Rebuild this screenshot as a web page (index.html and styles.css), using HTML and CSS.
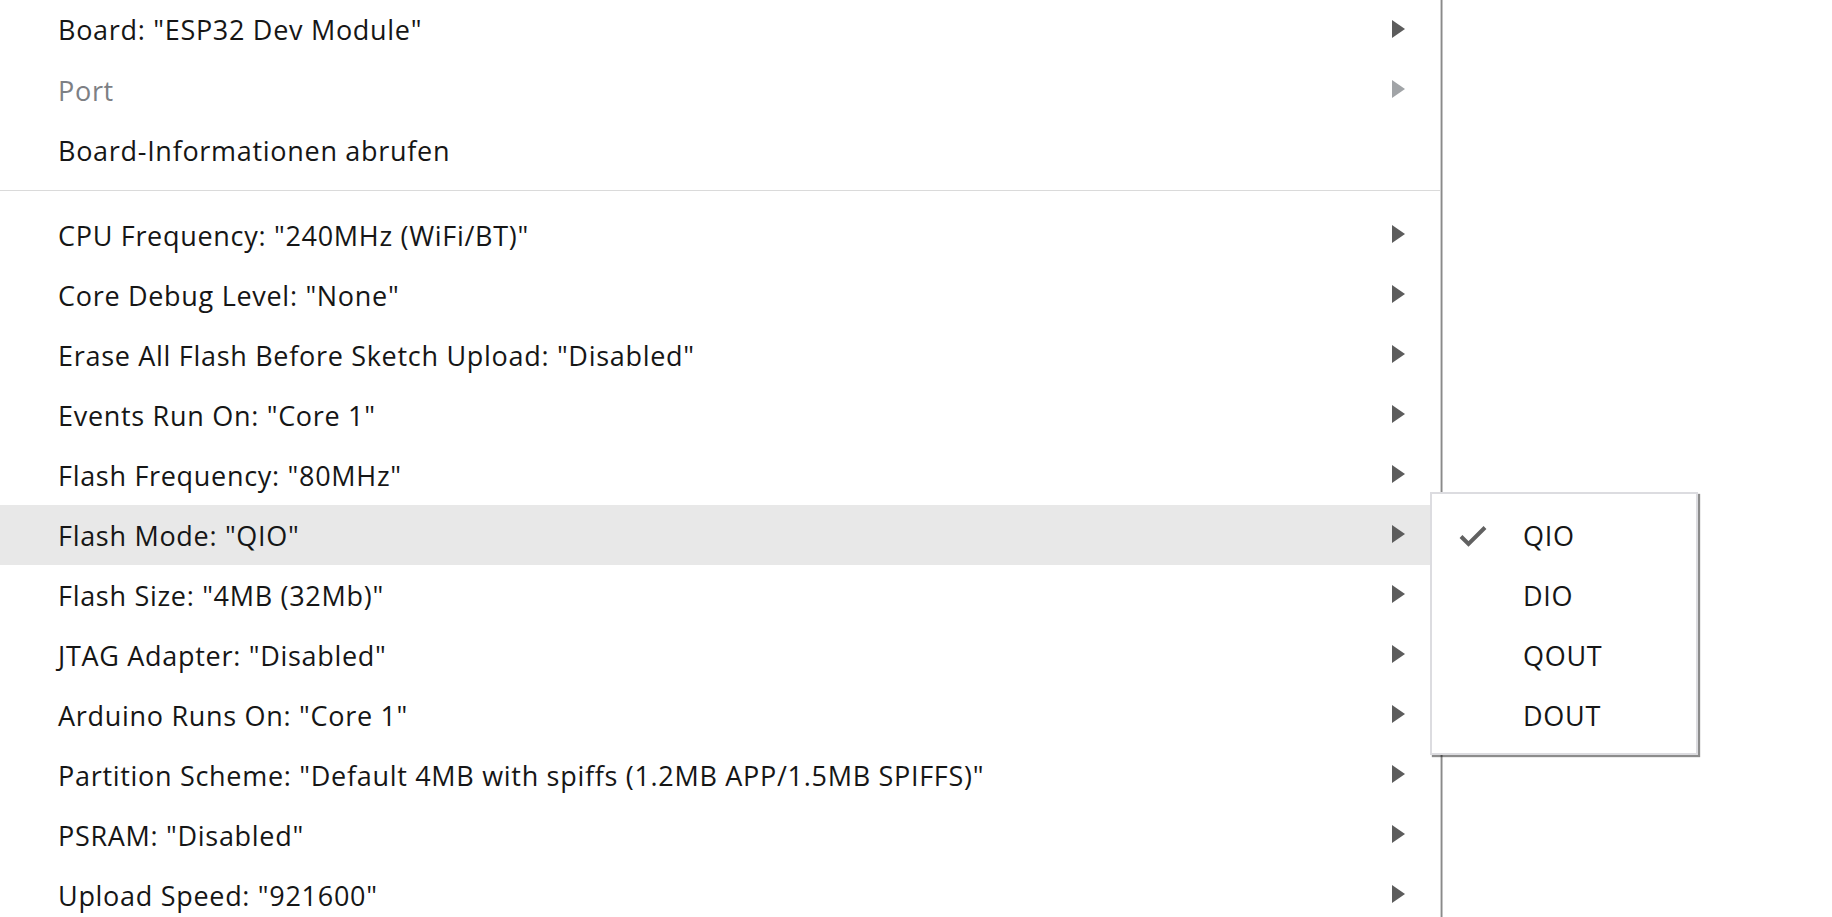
FILE: index.html
```html
<!DOCTYPE html>
<html lang="de">
<head>
<meta charset="utf-8">
<title>Werkzeuge</title>
<link rel="stylesheet" href="styles.css">
</head>
<body>
<div class="screen">
  <div class="menu">
    <div class="item"><span class="label">Board: "ESP32 Dev Module"</span><span class="arrow"></span></div>
    <div class="item disabled"><span class="label">Port</span><span class="arrow"></span></div>
    <div class="item"><span class="label">Board-Informationen abrufen</span></div>
    <div class="separator"></div>
    <div class="item"><span class="label">CPU Frequency: "240MHz (WiFi/BT)"</span><span class="arrow"></span></div>
    <div class="item"><span class="label">Core Debug Level: "None"</span><span class="arrow"></span></div>
    <div class="item"><span class="label">Erase All Flash Before Sketch Upload: "Disabled"</span><span class="arrow"></span></div>
    <div class="item"><span class="label">Events Run On: "Core 1"</span><span class="arrow"></span></div>
    <div class="item"><span class="label">Flash Frequency: "80MHz"</span><span class="arrow"></span></div>
    <div class="item active"><span class="label">Flash Mode: "QIO"</span><span class="arrow"></span></div>
    <div class="item"><span class="label">Flash Size: "4MB (32Mb)"</span><span class="arrow"></span></div>
    <div class="item"><span class="label">JTAG Adapter: "Disabled"</span><span class="arrow"></span></div>
    <div class="item"><span class="label">Arduino Runs On: "Core 1"</span><span class="arrow"></span></div>
    <div class="item"><span class="label">Partition Scheme: "Default 4MB with spiffs (1.2MB APP/1.5MB SPIFFS)"</span><span class="arrow"></span></div>
    <div class="item"><span class="label">PSRAM: "Disabled"</span><span class="arrow"></span></div>
    <div class="item"><span class="label">Upload Speed: "921600"</span><span class="arrow"></span></div>
  </div>
  <div class="edge"></div>
  <div class="rest"></div>

  <div class="submenu">
    <div class="sub-item"><span class="check"><svg width="28" height="22" viewBox="0 0 28 22"><path d="M2 11.5 L9.5 19 L26 2.5" fill="none" stroke="#616161" stroke-width="4"/></svg></span><span class="sub-label">QIO</span></div>
    <div class="sub-item"><span class="check"></span><span class="sub-label">DIO</span></div>
    <div class="sub-item"><span class="check"></span><span class="sub-label">QOUT</span></div>
    <div class="sub-item"><span class="check"></span><span class="sub-label">DOUT</span></div>
  </div>
</div>
</body>
</html>
```

FILE: styles.css
```css
html, body {
  margin: 0;
  padding: 0;
  background: #ffffff;
  overflow: hidden;
}

.screen {
  position: relative;
  display: flex;
  width: 1832px;
  height: 917px;
  font-family: "Open Sans", "Noto Sans", sans-serif;
  font-size: 27px;
  letter-spacing: 0.7px;
  color: #161616;
}

.menu {
  width: 1440px;
  flex: none;
  display: flex;
  flex-direction: column;
}

.item {
  height: 60px;
  flex: none;
  display: flex;
  align-items: center;
  padding-left: 58px;
  padding-right: 35px;
}

.item.active {
  background: #e8e8e8;
}

.item.disabled {
  color: #7d8084;
}

.label {
  flex: 1;
  white-space: nowrap;
  margin-top: 0;
}

.item:first-child .label {
  margin-top: -2px;
}

.arrow {
  width: 0;
  height: 0;
  border-top: 9px solid transparent;
  border-bottom: 9px solid transparent;
  border-left: 13px solid #5c5c5c;
  margin-top: -3px;
}

.item.disabled .arrow {
  border-left-color: #a1a4a7;
}

.separator {
  height: 1px;
  background: #dadada;
  margin: 10px 0 14px;
  flex: none;
}

.edge {
  width: 1px;
  flex: none;
  border-left: 1px solid #cfcfcf;
  border-right: 1px solid #c4c4c4;
  background: #8a8a8a;
}

.rest {
  flex: 1;
}

.submenu {
  position: absolute;
  left: 1430px;
  top: 492px;
  width: 264px;
  padding: 12px 0 7px;
  background: #ffffff;
  border: 2px solid #dcdce0;
  box-shadow: 2px 2px 1px rgba(0, 0, 0, 0.45);
}

.sub-item {
  height: 60px;
  display: flex;
  align-items: center;
}

.check {
  width: 28px;
  height: 22px;
  margin-left: 27px;
  margin-right: 36px;
  display: flex;
}

.sub-label {
  white-space: nowrap;
  margin-top: -2px;
}
```
